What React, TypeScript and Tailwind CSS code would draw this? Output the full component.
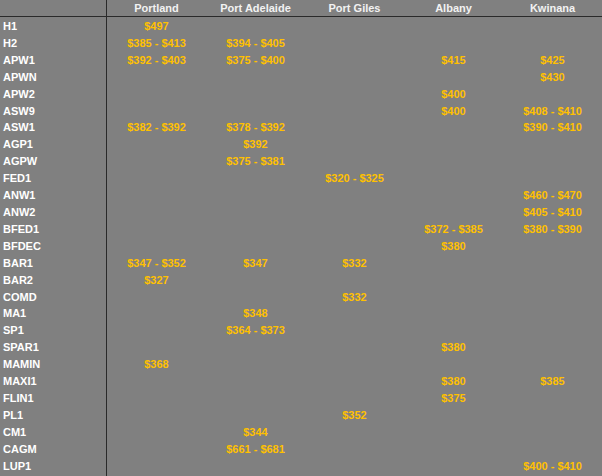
import React from 'react';

type Row = [string, string, string, string, string, string];

const ports = ['Portland', 'Port Adelaide', 'Port Giles', 'Albany', 'Kwinana'];

const rows: Row[] = [
  ['H1', '$497', '', '', '', ''],
  ['H2', '$385 - $413', '$394 - $405', '', '', ''],
  ['APW1', '$392 - $403', '$375 - $400', '', '$415', '$425'],
  ['APWN', '', '', '', '', '$430'],
  ['APW2', '', '', '', '$400', ''],
  ['ASW9', '', '', '', '$400', '$408 - $410'],
  ['ASW1', '$382 - $392', '$378 - $392', '', '', '$390 - $410'],
  ['AGP1', '', '$392', '', '', ''],
  ['AGPW', '', '$375 - $381', '', '', ''],
  ['FED1', '', '', '$320 - $325', '', ''],
  ['ANW1', '', '', '', '', '$460 - $470'],
  ['ANW2', '', '', '', '', '$405 - $410'],
  ['BFED1', '', '', '', '$372 - $385', '$380 - $390'],
  ['BFDEC', '', '', '', '$380', ''],
  ['BAR1', '$347 - $352', '$347', '$332', '', ''],
  ['BAR2', '$327', '', '', '', ''],
  ['COMD', '', '', '$332', '', ''],
  ['MA1', '', '$348', '', '', ''],
  ['SP1', '', '$364 - $373', '', '', ''],
  ['SPAR1', '', '', '', '$380', ''],
  ['MAMIN', '$368', '', '', '', ''],
  ['MAXI1', '', '', '', '$380', '$385'],
  ['FLIN1', '', '', '', '$375', ''],
  ['PL1', '', '', '$352', '', ''],
  ['CM1', '', '$344', '', '', ''],
  ['CAGM', '', '$661 - $681', '', '', ''],
  ['LUP1', '', '', '', '', '$400 - $410'],
];

const App: React.FC = () => {
  return (
    <div
      className="w-[602px] h-[476px] overflow-hidden bg-[#808080] text-[11px] font-bold"
      style={{ fontFamily: '"Liberation Sans", Arial, sans-serif' }}
    >
      <div className="flex h-[17px] border-b border-[#2a2a2a]">
        <div className="w-[107px] shrink-0 border-r border-[#2a2a2a]" />
        {ports.map((p) => (
          <div key={p} className="w-[99px] shrink-0 flex items-center justify-center text-[#f2f2f2]">
            {p}
          </div>
        ))}
      </div>
      <div className="flex">
        <div className="w-[107px] shrink-0 border-r border-[#2a2a2a] pt-px pl-[3px] h-[460px] text-white">
          {rows.map((r) => (
            <div key={r[0]} className="h-[16.92px] leading-[16.92px]">
              {r[0]}
            </div>
          ))}
        </div>
        <div className="flex-1 pt-px">
          {rows.map((r) => (
            <div key={r[0]} className="flex h-[16.92px] leading-[16.92px]">
              {r.slice(1).map((v, i) => (
                <div key={i} className="w-[99px] shrink-0 text-center text-[#ffc000]">
                  {v}
                </div>
              ))}
            </div>
          ))}
        </div>
      </div>
    </div>
  );
};

export default App;
